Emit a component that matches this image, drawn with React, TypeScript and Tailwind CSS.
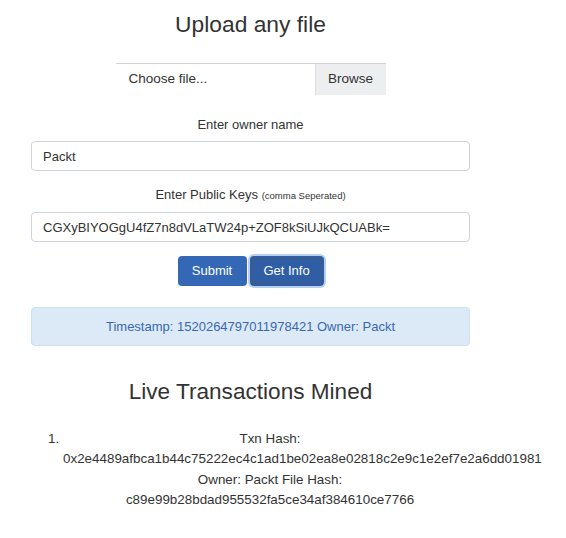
const font = { fontFamily: '"Liberation Sans", Arial, sans-serif' };

const inputCls =
    'w-full h-[30px] px-[11px] border border-[#ced4da] rounded-[4px] bg-white text-[13px] text-[#333] outline-none';

const App = () => {
    return (
        <div className="w-[566px] h-[538px] bg-white text-[#333] font-['Liberation_Sans',Arial,sans-serif]">
            <div className="ml-[31px] w-[439px] flex flex-col">
                <h1 className="text-center text-[22.8px] leading-[28px] mt-[10px]">Upload any file</h1>

                <div className="mt-[25px] mx-auto w-[270px] h-[32px] flex border-t border-[#d5d5d5] text-[13.5px]">
                    <div className="flex-1 flex items-center pl-[13px]">Choose file...</div>
                    <div className="w-[71px] flex items-center justify-center bg-[#eceeef] border-l border-[#dcdcdc]">
                        Browse
                    </div>
                </div>

                <label className="mt-[21px] text-center text-[13px] leading-[18px]">Enter owner name</label>
                <input className={`${inputCls} mt-[7px]`} defaultValue="Packt" readOnly />

                <label className="mt-[15px] text-center text-[13px] leading-[18px]">
                    Enter Public Keys <span className="text-[9.5px]">(comma Seperated)</span>
                </label>
                <input
                    className={`${inputCls} mt-[7px]`}
                    defaultValue="CGXyBIYOGgU4fZ7n8dVLaTW24p+ZOF8kSiUJkQCUABk="
                    readOnly
                />

                <div className="mt-[14px] flex justify-center gap-[3px]">
                    <button className="w-[69px] h-[30px] rounded-[4px] bg-[#3468b6] text-white text-[13px]">
                        Submit
                    </button>
                    <button className="w-[74px] h-[30px] rounded-[4px] bg-[#2f5ea6] text-white text-[13px] outline-1 outline-dotted outline-[#555] -outline-offset-[3px] ring-2 ring-[#b8d0ee]">
                        Get Info
                    </button>
                </div>

                <div className="mt-[21px] h-[39px] flex items-center justify-center bg-[#dbeaf6] border border-[#cbe0f1] rounded-[4px] text-[13px] text-[#3a68ae]">
                    Timestamp: 1520264797011978421 Owner: Packt
                </div>

                <h2 className="mt-[33px] text-center text-[22.6px] leading-[26px]">Live Transactions Mined</h2>
            </div>

            <ol className="mt-[24px] ml-[31px] w-[446px] pl-[32px] list-decimal text-[13.4px] leading-[20.3px]" style={font}>
                <li className="text-center">
                    <div>Txn Hash:</div>
                    <div className="text-left whitespace-nowrap">0x2e4489afbca1b44c75222ec4c1ad1be02ea8e02818c2e9c1e2ef7e2a6dd01981</div>
                    <div>Owner: Packt File Hash:</div>
                    <div>c89e99b28bdad955532fa5ce34af384610ce7766</div>
                </li>
            </ol>
        </div>
    );
};

export default App;
